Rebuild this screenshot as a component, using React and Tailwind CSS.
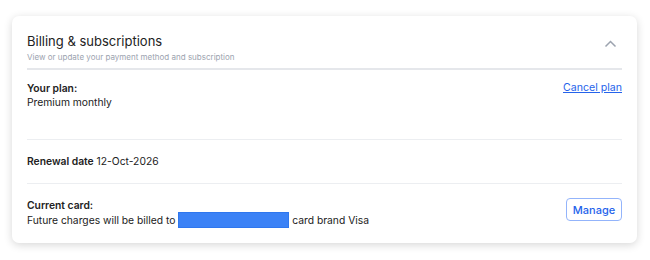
import React from "react";

export default function App() {
  return (
    <div className="w-[650px] h-[260px] bg-white pt-[16px] pl-[12px]" style={{ fontFamily: "Inter, 'Noto Sans', sans-serif" }}>
      <div className="w-[625px] h-[227px] bg-white rounded-[7px] shadow-[0_2px_8px_rgba(0,0,0,0.16)] px-[15px] pt-[15px] flex flex-col text-[#222]">
        <div className="flex items-start justify-between">
          <div>
            <div className="text-[13px] leading-[20px] text-[#222]">Billing &amp; subscriptions</div>
            <div className="text-[8px] leading-[12px] text-[#9ca3af]">View or update your payment method and subscription</div>
          </div>
          <svg width="13" height="9" viewBox="0 0 13 9" className="mt-[8px] mr-[5px]" fill="none">
            <path d="M1.5 7.5 L6.5 2.5 L11.5 7.5" stroke="#9ca3af" strokeWidth="1.5" />
          </svg>
        </div>
        <div className="mt-[5px] h-[2px] bg-[#e5e7eb]" />
        <div className="h-[69px] pt-[11px] flex justify-between text-[10.3px] leading-[14px]">
          <div>
            <div className="font-semibold">Your plan:</div>
            <div>Premium monthly</div>
          </div>
          <a href="#" className="text-[#2563eb] underline text-[10.6px]">Cancel plan</a>
        </div>
        <div className="h-[1px] bg-[#eceef1]" />
        <div className="h-[43px] pt-[14px] text-[10.3px] leading-[14px]">
          <span className="font-semibold">Renewal date</span> 12-Oct-2026
        </div>
        <div className="h-[1px] bg-[#eceef1]" />
        <div className="pt-[14px] flex justify-between items-start text-[10.3px] leading-[14px]">
          <div>
            <div className="font-semibold">Current card:</div>
            <div className="flex items-center">
              <span>Future charges will be billed to&nbsp;</span>
              <span className="inline-block w-[111px] h-[16px] bg-[#3b82f6] border border-[#2f77ee]" />
              <span>&nbsp;card brand Visa</span>
            </div>
          </div>
          <button className="w-[56px] h-[23px] border border-[#93b4fb] rounded-[4px] text-[#2563eb] text-[11px] font-medium">Manage</button>
        </div>
      </div>
    </div>
  );
}
